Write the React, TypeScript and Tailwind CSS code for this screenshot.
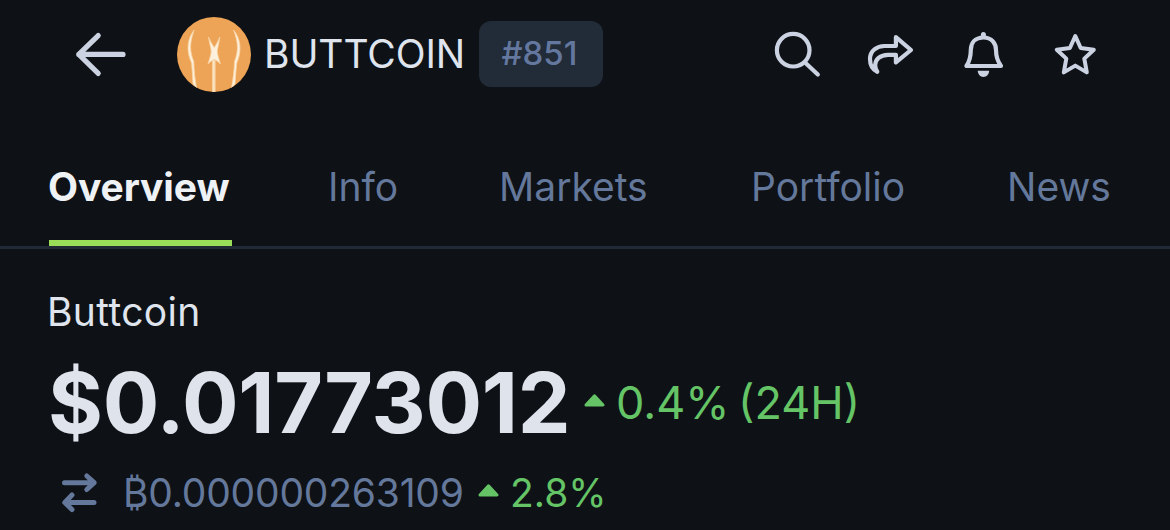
import type { ReactNode } from 'react';

// Shared wrapper for the line icons in the top bar
const LineIcon = ({ box, className, children }: { box: string; className: string; children: ReactNode }) => (
  <svg
    viewBox={box}
    className={`shrink-0 ${className}`}
    fill="none"
    stroke="currentColor"
    strokeWidth="4.2"
    strokeLinecap="round"
    strokeLinejoin="round"
  >
    {children}
  </svg>
);

const BackIcon = () => (
  <LineIcon box="0 0 54 48" className="w-[54px] h-[48px]">
    <path strokeWidth="5.2" d="M25.2 5.6 L5.8 24.4 L25.2 43.4 M5.8 24.4 H50" />
  </LineIcon>
);

const SearchIcon = () => (
  <LineIcon box="0 0 50 50" className="w-[50px] h-[50px]">
    <circle cx="20.2" cy="21.2" r="16.3" />
    <path d="M32 33.4 L44.8 45.6" />
  </LineIcon>
);

const ShareIcon = () => (
  <LineIcon box="0 0 50 44" className="w-[50px] h-[44px]">
    <path d="M29.9 5.2 L45 18 L29.9 30.4 V22.8 H22 C14 22.8 9.2 27.5 9.2 33 C9.2 36 10 38 11.3 39.8 C6.5 37.5 4 32.5 4 27 C4 18.5 11 14 18.5 14 H29.9 Z" />
  </LineIcon>
);

const BellIcon = () => (
  <LineIcon box="0 0 44 50" className="w-[44px] h-[50px]">
    <path d="M22.4 8.5 C13.5 8.5 9.8 14.5 9.8 21 C9.8 28.5 8.5 32.5 5.4 37 H40 C36.7 32.5 35 28.5 35 21 C35 14.5 31 8.5 22.4 8.5 Z" />
    <path strokeWidth="5" d="M22.4 5.5 V7.5" />
    <path stroke="none" fill="currentColor" d="M16.7 41.8 H28.2 C28 45.5 25.6 48 22.4 48 C19.2 48 17 45.5 16.7 41.8 Z" />
  </LineIcon>
);

const StarIcon = () => (
  <LineIcon box="0 0 46 46" className="w-[46px] h-[46px]">
    <path strokeWidth="4" d="M23.3 5 L28.7 17 L41.8 18.7 L32.3 27.6 L34.8 41.4 L23.3 34.6 L11.8 41.4 L14.3 27.6 L4.8 18.7 L17.9 17 Z" />
  </LineIcon>
);

const SwapIcon = () => (
  <LineIcon box="0 0 38 42" className="w-[38px] h-[42px]">
    <path strokeWidth="5" d="M4.5 10.7 H34 M26.8 4 L34.2 10.7 L26.8 17.5" />
    <path strokeWidth="5" d="M34 30.5 H5 M12 23 L4.8 30.5 L12 37.5" />
  </LineIcon>
);

const UpCaret = ({ className }: { className: string }) => (
  <svg viewBox="0 0 21 13" className={`w-[21px] h-[13px] shrink-0 ${className}`}>
    <path d="M10.5 1.8 L19 11 H2 Z" fill="currentColor" stroke="currentColor" strokeWidth="3" strokeLinejoin="round" />
  </svg>
);

const CoinLogo = () => (
  <svg viewBox="0 0 74 75" className="w-[74px] h-[75px] shrink-0">
    <defs>
      <clipPath id="coin">
        <ellipse cx="37" cy="37.5" rx="37" ry="37.5" />
      </clipPath>
    </defs>
    <g clipPath="url(#coin)">
      <rect width="74" height="75" fill="#eda456" />
      <g fill="#fdf0dc" stroke="#f8d3a3" strokeWidth="0.8">
        <path d="M17.2 13 C12.5 26 12.5 34 16.8 44.5 C17 54 18 62 19.5 71 L16 67 C15.5 60 15.3 53 14.6 46 C9 34 10 22 17.2 13 Z" />
        <path d="M56.5 13 C61.5 26 61.5 34 57.5 44.5 C57.2 54 56 62 54.5 71 L58 67 C58.5 60 59 53 59.8 46 C65 34 64 22 56.5 13 Z" />
        <path d="M31.5 20 C33.5 24.5 35.5 28 37.3 30.5 C39 28 41 24.5 42.8 20 C42 27 40.5 31 40.3 34.5 C40.5 38 42 42 43.5 47 C41 44.5 39 43 37.3 42.5 C35.5 43 33.5 44.5 31 47 C32.5 42 34 38 34.2 34.5 C34 31 32.5 27 31.5 20 Z" />
      </g>
      <path d="M36.8 43 V75" stroke="#f7d2a1" strokeWidth="3.6" />
      <path d="M36.8 43 V75" stroke="#fbe4c5" strokeWidth="1.4" />
    </g>
  </svg>
);

const tabs = [
  { label: 'Info', className: 'ml-[96px] w-[70px]' },
  { label: 'Markets', className: 'ml-[101px] w-[148px]' },
  { label: 'Portfolio', className: 'ml-[104px] w-[152px]' },
  { label: 'News', className: 'ml-[104px] w-[104px]' },
];

const TopBar = () => (
  <header className="flex h-[108px] items-center pl-[73px] text-[#cbd2e1]">
    <BackIcon />
    <div className="ml-[50px] flex items-center">
      <CoinLogo />
      <span className="ml-[13px] w-[203px] pt-px text-[39px] tracking-[-0.1px] text-[#dfe4ed]">BUTTCOIN</span>
      <span className="ml-[12px] flex h-[66px] w-[124px] items-center justify-center rounded-[12px] bg-[#222b38] pr-[3px] text-[33px] font-medium text-[#64789f]">
        #851
      </span>
    </div>
    <div className="ml-[170px] flex items-center">
      <SearchIcon />
      <div className="ml-[43px] flex"><ShareIcon /></div>
      <div className="ml-[45px] flex"><BellIcon /></div>
      <div className="ml-[47px] flex"><StarIcon /></div>
    </div>
  </header>
);

const Tabs = () => (
  <nav className="flex h-[141px] border-b-[3px] border-[#222936] text-[39px] leading-[50px] text-[#64789b]">
    <div className="ml-[49px] w-[183px] border-b-[6px] border-[#98dc58] pt-[54px] font-bold tracking-[-0.1px] text-[#eff2f5]">
      <span className="-ml-px">Overview</span>
    </div>
    {tabs.map((tab) => (
      <div key={tab.label} className={`pt-[54px] ${tab.className}`}>{tab.label}</div>
    ))}
  </nav>
);

const Price = () => (
  <main className="flex flex-col pt-[38px] pl-[47px]">
    <h1 className="h-[50px] text-[39px] leading-[50px] tracking-[0.35px] text-[#dfe4ed]">Buttcoin</h1>
    <div className="mt-[23px] ml-px flex h-[85px] items-center text-[#65c466]">
      <span className="w-[536px] text-[84px] leading-[85px] font-bold tracking-[-0.3px] text-[#dfe3ec]">$0.01773012</span>
      <UpCaret className="-mt-[4px]" />
      <span className="ml-[11px] text-[45px] leading-[50px] [word-spacing:-4px]">0.4% (24H)</span>
    </div>
    <div className="mt-[23px] ml-px flex h-[50px] items-center text-[39px] leading-[50px] text-[#64789b]">
      <div className="ml-[12px] flex"><SwapIcon /></div>
      <span className="ml-[25px] w-[355px] tracking-[-0.2px]">₿0.000000263109</span>
      <span className="flex items-center text-[#65c466]">
        <UpCaret className="-mt-[5px]" />
        <span className="ml-[11px]">2.8%</span>
      </span>
    </div>
  </main>
);

export default function App() {
  return (
    <div className="h-[530px] w-[1170px] overflow-hidden bg-[#0e1116] font-['Inter',sans-serif] whitespace-nowrap">
      <TopBar />
      <Tabs />
      <Price />
    </div>
  );
}
